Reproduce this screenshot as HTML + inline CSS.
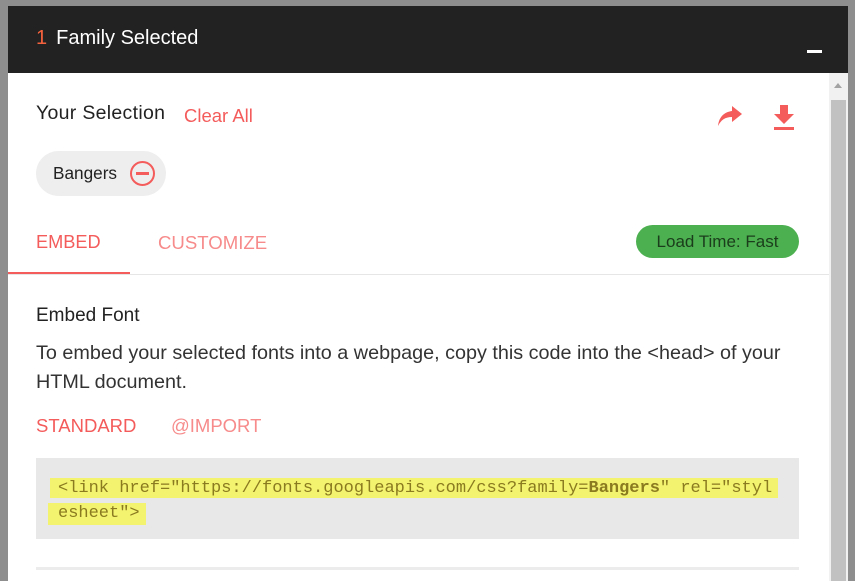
<!DOCTYPE html>
<html><head><style>
*{margin:0;padding:0;box-sizing:border-box}
body{width:855px;height:581px;background:#8e8e8e;position:relative;overflow:hidden;font-family:"Liberation Sans",sans-serif}
.win{position:absolute;left:8px;top:6px;width:840px;height:575px;background:#fff}
.hdr{position:absolute;left:0;top:0;width:840px;height:67px;background:#222}
.hdr .t{position:absolute;left:28px;top:21px;font-size:20px;color:#fff;letter-spacing:0px}
.hdr .t b{color:#f4613d;font-weight:normal;margin-right:9px}
.hdr .m{position:absolute;left:799px;top:44px;width:15px;height:3px;background:#fff}
.sb{position:absolute;left:821px;top:67px;width:19px;height:508px;background:#f1f1f1}
.sb .th{position:absolute;left:2px;top:27px;width:15px;height:481px;background:#c1c1c1}
.sb .ar{position:absolute;left:5px;top:10px;border-left:4px solid transparent;border-right:4px solid transparent;border-bottom:5px solid #a3a3a3}
.a{position:absolute;white-space:nowrap}
.red{color:#f45b5b}
</style></head><body>
<div class="win">
<div class="hdr"><div class="t"><b>1</b>Family Selected</div><div class="m"></div></div>
<div class="a" style="left:28px;top:96px;font-size:19.5px;color:#222;letter-spacing:0.3px">Your Selection</div>
<div class="a red" style="left:176px;top:99px;font-size:18.5px">Clear All</div>
<svg class="a" style="left:708px;top:96px" width="28" height="26" viewBox="0 0 28 26"><path d="M16 4 L26 12 L16 20 L16 15 C9 15 5 18 2 24 C3 15 8 10 16 9 Z" fill="#f45b5b"/></svg>
<svg class="a" style="left:764px;top:97px" width="24" height="28" viewBox="0 0 24 28"><path d="M8 2h8v9h6l-10 10L2 11h6z" fill="#f45b5b"/><rect x="2" y="24" width="20" height="3" fill="#f45b5b"/></svg>
<div class="a" style="left:28px;top:145px;width:130px;height:45px;border-radius:23px;background:#eee"></div>
<div class="a" style="left:45px;top:157px;font-size:17.2px;color:#222">Bangers</div>
<div class="a" style="left:122px;top:155px;width:25px;height:25px;border:2.5px solid #f45b5b;border-radius:50%"></div>
<div class="a" style="left:128px;top:166px;width:13px;height:3px;background:#f45b5b"></div>
<div class="a red" style="left:28px;top:226px;font-size:18.2px">EMBED</div>
<div class="a" style="left:150px;top:226px;font-size:18.6px;color:#f78b8b">CUSTOMIZE</div>
<div class="a" style="left:0;top:266px;width:122px;height:3px;background:#f45b5b"></div>
<div class="a" style="left:0;top:268px;width:821px;height:1px;background:#e6e6e6"></div>
<div class="a" style="left:628px;top:219px;width:163px;height:33px;border-radius:17px;background:#4caf50;color:#1b3d1b;font-size:17px;text-align:center;line-height:33px">Load Time: Fast</div>
<div class="a" style="left:28px;top:299px;font-size:19px;color:#222">Embed Font</div>
<div class="a" style="left:28px;top:333px;font-size:19.8px;color:#333;line-height:29px;white-space:normal;width:785px">To embed your selected fonts into a webpage, copy this code into the &lt;head&gt; of your HTML document.</div>
<div class="a red" style="left:28px;top:409px;font-size:18.5px">STANDARD</div>
<div class="a" style="left:163px;top:409px;font-size:18.5px;color:#f78b8b">@IMPORT</div>
<div class="a" style="left:28px;top:452px;width:763px;height:81px;background:#e8e8e8"></div>
<div class="a" style="left:42px;top:472px;width:728px;height:20px;background:#f3f36f"></div>
<div class="a" style="left:40px;top:497px;width:98px;height:22px;background:#f3f36f"></div>
<div class="a" style="left:50px;top:470px;font-family:'Liberation Mono',monospace;font-size:17px;letter-spacing:0;color:#8a7a20;line-height:25px">&lt;link href="https://fonts.googleapis.com/css?family=<b>Bangers</b>" rel="styl<br>esheet"&gt;</div>
<div class="a" style="left:28px;top:561px;width:763px;height:3px;background:#ececec"></div>
<div class="sb"><div class="ar"></div><div class="th"></div></div>
</div>
</body></html>
